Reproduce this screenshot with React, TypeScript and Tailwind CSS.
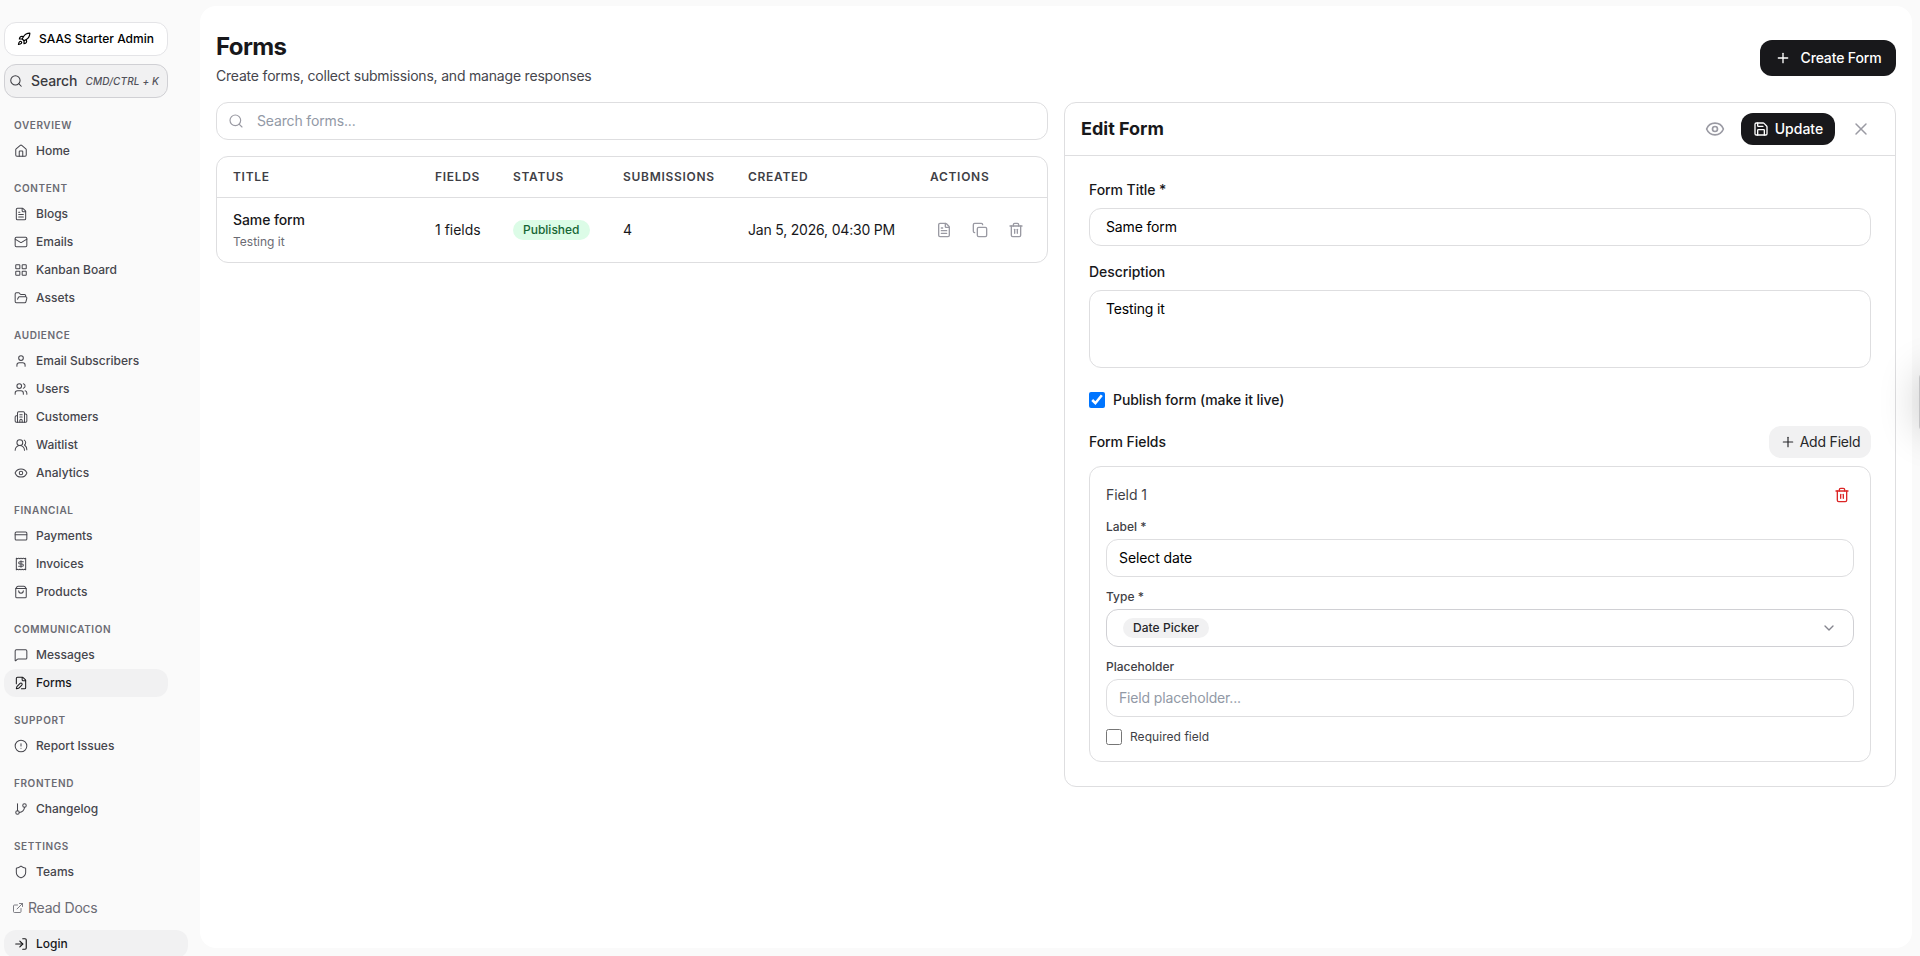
import { ReactNode, useState } from "react";
import {
  Building2,
  ChevronDown,
  CircleAlert,
  Copy,
  CreditCard,
  ExternalLink,
  Eye,
  FilePen,
  FileText,
  FolderOpen,
  GitBranch,
  House,
  LayoutGrid,
  LogIn,
  LucideIcon,
  Mail,
  MessageSquare,
  Plus,
  Receipt,
  Rocket,
  Save,
  Search,
  Shield,
  ShoppingBag,
  Trash2,
  User,
  Users,
  UsersRound,
  X,
} from "lucide-react";

interface NavItem {
  name: string;
  icon: LucideIcon;
}

interface NavGroup {
  title: string;
  items: NavItem[];
}

const navGroups: NavGroup[] = [
  { title: "Overview", items: [{ name: "Home", icon: House }] },
  {
    title: "Content",
    items: [
      { name: "Blogs", icon: FileText },
      { name: "Emails", icon: Mail },
      { name: "Kanban Board", icon: LayoutGrid },
      { name: "Assets", icon: FolderOpen },
    ],
  },
  {
    title: "Audience",
    items: [
      { name: "Email Subscribers", icon: User },
      { name: "Users", icon: Users },
      { name: "Customers", icon: Building2 },
      { name: "Waitlist", icon: UsersRound },
      { name: "Analytics", icon: Eye },
    ],
  },
  {
    title: "Financial",
    items: [
      { name: "Payments", icon: CreditCard },
      { name: "Invoices", icon: Receipt },
      { name: "Products", icon: ShoppingBag },
    ],
  },
  {
    title: "Communication",
    items: [
      { name: "Messages", icon: MessageSquare },
      { name: "Forms", icon: FilePen },
    ],
  },
  { title: "Support", items: [{ name: "Report Issues", icon: CircleAlert }] },
  { title: "Frontend", items: [{ name: "Changelog", icon: GitBranch }] },
  { title: "Settings", items: [{ name: "Teams", icon: Shield }] },
];

function Sidebar() {
  return (
    <aside className="w-[200px] shrink-0 pl-1 pt-[22px] text-[#46464d]">
      <div className="w-[164px]">
        <button className="flex h-[34px] w-full items-center gap-2 rounded-xl border border-[#e4e4e7] bg-white pl-3 text-xs font-medium text-black">
          <Rocket size={14} />
          SAAS Starter Admin
        </button>
        <button className="mt-2 flex h-[34px] w-full items-center rounded-xl border border-[#d0d0d4] bg-[#f1f1f2] pl-1 text-sm font-medium text-[#3a3a40]">
          <Search size={14} strokeWidth={1.75} />
          <span className="ml-2 tracking-[-0.1px]">Search</span>
          <span className="ml-2 text-[10px] italic tracking-[0.15px] text-[#52525b]">
            CMD/CTRL + K
          </span>
        </button>

        <nav className="mt-5 flex flex-col gap-4">
          {navGroups.map((group) => (
            <div key={group.title}>
              <p className="mb-1 pl-2.5 text-[10px] font-semibold uppercase leading-[15px] tracking-[0.6px] text-[#6b6b73]">
                {group.title}
              </p>
              {group.items.map(({ name, icon: Icon }) => (
                <a
                  key={name}
                  className={
                    name === "Forms"
                      ? "flex h-7 items-center gap-2 rounded-xl bg-[#f1f1f2] pl-2.5 text-xs font-medium text-[#18181b]"
                      : "flex h-7 items-center gap-2 pl-2.5 text-xs font-medium"
                  }
                >
                  <Icon size={14} strokeWidth={1.75} />
                  {name}
                </a>
              ))}
            </div>
          ))}
        </nav>
      </div>

      <a className="mt-3 flex h-5 items-center gap-1 pl-2 text-sm tracking-[-0.2px] text-[#6b6b73]">
        <ExternalLink size={12} strokeWidth={1.75} />
        Read Docs
      </a>
      <a className="mt-3 flex h-7 w-[184px] items-center gap-2 rounded-xl bg-[#f1f1f2] pl-2.5 text-xs font-medium text-[#18181b]">
        <LogIn size={14} />
        Login
      </a>
    </aside>
  );
}

function FormsTable() {
  return (
    <div className="mt-4 overflow-hidden rounded-xl border border-[#dedee0]">
      <table className="w-full table-fixed text-left">
        <colgroup>
          <col className="w-[202px]" />
          <col className="w-[78px]" />
          <col className="w-[110px]" />
          <col className="w-[125px]" />
          <col className="w-[182px]" />
          <col />
        </colgroup>
        <thead>
          <tr className="h-10 border-b border-[#dedee0] text-xs uppercase tracking-[0.7px] text-[#3f3f46] [&>th]:font-semibold">
            <th className="pl-4">Title</th>
            <th className="pl-4">Fields</th>
            <th className="pl-4">Status</th>
            <th className="pl-4">Submissions</th>
            <th className="pl-4">Created</th>
            <th className="pl-4">Actions</th>
          </tr>
        </thead>
        <tbody>
          <tr className="h-[65px] text-sm text-[#18181b]">
            <td className="pl-4">
              <div className="font-medium leading-5 tracking-[-0.1px]">
                Same form
              </div>
              <div className="mt-1 text-xs leading-4 text-[#6b6b73]">
                Testing it
              </div>
            </td>
            <td className="pl-4">1 fields</td>
            <td className="pl-4">
              <span className="inline-block h-5 rounded-full bg-[#dcfce7] px-2.5 text-xs font-medium leading-5 text-[#166534]">
                Published
              </span>
            </td>
            <td className="pl-4">4</td>
            <td className="pl-4 tracking-[-0.2px]">Jan 5, 2026, 04:30 PM</td>
            <td className="pl-[22px]">
              <div className="flex gap-5 text-[#9a9aa3]">
                <FileText size={16} />
                <Copy size={16} />
                <Trash2 size={16} />
              </div>
            </td>
          </tr>
        </tbody>
      </table>
    </div>
  );
}

function SmallLabel({ children }: { children: ReactNode }) {
  return (
    <label className="block text-xs font-medium leading-4 text-[#3f3f46]">
      {children}
    </label>
  );
}

function EditFormPanel() {
  const [title, setTitle] = useState("Same form");
  const [description, setDescription] = useState("Testing it");
  const [published, setPublished] = useState(true);
  const [label, setLabel] = useState("Select date");

  return (
    <section className="h-[685px] rounded-xl border border-[#dedee0]">
      {/* Panel header */}
      <div className="flex h-[53px] items-center border-b border-[#dedee0] pl-4 pr-6">
        <h2 className="flex-1 text-lg font-bold text-[#18181b]">Edit Form</h2>
        <Eye size={20} className="text-[#9a9aa3]" />
        <button className="ml-4 flex h-8 w-[94px] items-center justify-center gap-1.5 rounded-xl bg-[#18181b] text-sm font-medium text-white">
          <Save size={16} />
          Update
        </button>
        <X size={20} strokeWidth={1.75} className="ml-4 text-[#9a9aa3]" />
      </div>

      <div className="px-6 pt-6 text-sm tracking-[-0.07px] text-[#18181b]">
        <label className="block font-medium leading-5">Form Title *</label>
        <input
          value={title}
          onChange={(e) => setTitle(e.target.value)}
          className="mt-2 block h-[38px] w-full rounded-xl border border-[#dedee0] px-4 pb-0.5 tracking-[-0.15px] text-black"
        />

        <label className="mt-4 block font-medium leading-5">Description</label>
        <textarea
          value={description}
          onChange={(e) => setDescription(e.target.value)}
          className="mt-2 block h-[78px] w-full resize-none rounded-xl border border-[#dedee0] px-4 py-2 leading-5 tracking-[-0.15px] text-black"
        />

        <label className="mt-[22px] flex h-5 items-center gap-2 font-medium">
          <input
            type="checkbox"
            checked={published}
            onChange={(e) => setPublished(e.target.checked)}
            className="size-4"
          />
          Publish form (make it live)
        </label>

        <div className="mt-4 flex h-8 items-center justify-between">
          <span className="font-medium">Form Fields</span>
          <button className="flex h-8 w-[102px] items-center justify-center gap-1 rounded-xl bg-[#f1f1f2] tracking-[-0.2px] text-[#27272a]">
            <Plus size={16} strokeWidth={1.75} />
            Add Field
          </button>
        </div>

        {/* Field card */}
        <div className="mt-2 h-[296px] rounded-xl border border-[#dedee0] px-4 pt-4">
          <div className="flex h-6 items-center justify-between pr-1">
            <span className="text-[#3f3f46]">Field 1</span>
            <Trash2 size={16} className="text-[#dc2626]" />
          </div>

          <div className="mt-3 tracking-normal">
            <SmallLabel>Label *</SmallLabel>
            <input
              value={label}
              onChange={(e) => setLabel(e.target.value)}
              className="mt-1 block h-[38px] w-full rounded-xl border border-[#dedee0] px-3 pb-0.5 tracking-[-0.1px] text-black"
            />
          </div>

          <div className="mt-3 tracking-normal">
            <SmallLabel>Type *</SmallLabel>
            <button className="mt-1 flex h-[38px] w-full items-center justify-between rounded-xl border border-[#d0d0d4] px-4">
              <span className="h-5 rounded-full bg-[#f1f1f2] px-2.5 text-xs font-medium leading-5 tracking-[0.05px] text-[#27272a]">
                Date Picker
              </span>
              <ChevronDown size={16} className="text-[#85858e]" />
            </button>
          </div>

          <div className="mt-3 tracking-normal">
            <SmallLabel>Placeholder</SmallLabel>
            <input
              placeholder="Field placeholder..."
              className="mt-1 block h-[38px] w-full rounded-xl border border-[#dedee0] px-3 pb-0.5 tracking-[-0.15px] placeholder:text-[#9299a6]"
            />
          </div>

          <label className="mt-3 flex h-4 items-center gap-2 text-xs tracking-[0.05px] text-[#3f3f46]">
            <input type="checkbox" className="size-4" />
            Required field
          </label>
        </div>
      </div>
    </section>
  );
}

export default function App() {
  return (
    <div className="relative flex h-[956px] w-full overflow-hidden bg-[#fafafa] font-['Inter',sans-serif]">
      <Sidebar />

      <main className="mb-2 mr-2 mt-1.5 flex-1 rounded-2xl bg-white px-4 pt-6">
        <header className="flex h-[72px] justify-between">
          <div>
            <h1 className="pt-px text-2xl font-bold leading-8 tracking-tight text-[#18181b]">
              Forms
            </h1>
            <p className="mt-[3px] text-sm leading-5 tracking-[-0.2px] text-[#46464d]">
              Create forms, collect submissions, and manage responses
            </p>
          </div>
          <button className="mt-2.5 flex h-9 w-[136px] items-center justify-center gap-2.5 rounded-xl bg-[#18181b] text-sm font-medium tracking-[-0.15px] text-white">
            <Plus size={16} />
            Create Form
          </button>
        </header>

        <div className="grid grid-cols-2 gap-4">
          <section>
            <div className="flex h-[38px] items-center gap-[13px] rounded-xl border border-[#dedee0] pl-[11px]">
              <Search
                size={16}
                strokeWidth={1.75}
                className="text-[#9a9aa3]"
              />
              <input
                placeholder="Search forms..."
                className="flex-1 text-sm tracking-[-0.15px] outline-none placeholder:text-[#9299a6]"
              />
            </div>
            <FormsTable />
          </section>
          <EditFormPanel />
        </div>
      </main>

      {/* Drawer parked just off the right edge, only its shadow shows */}
      <div className="absolute -right-[39px] top-[372px] h-[60px] w-10 rounded-md bg-[#c4c4c6] shadow-[0_0_40px_rgba(0,0,0,0.2)]" />
    </div>
  );
}
